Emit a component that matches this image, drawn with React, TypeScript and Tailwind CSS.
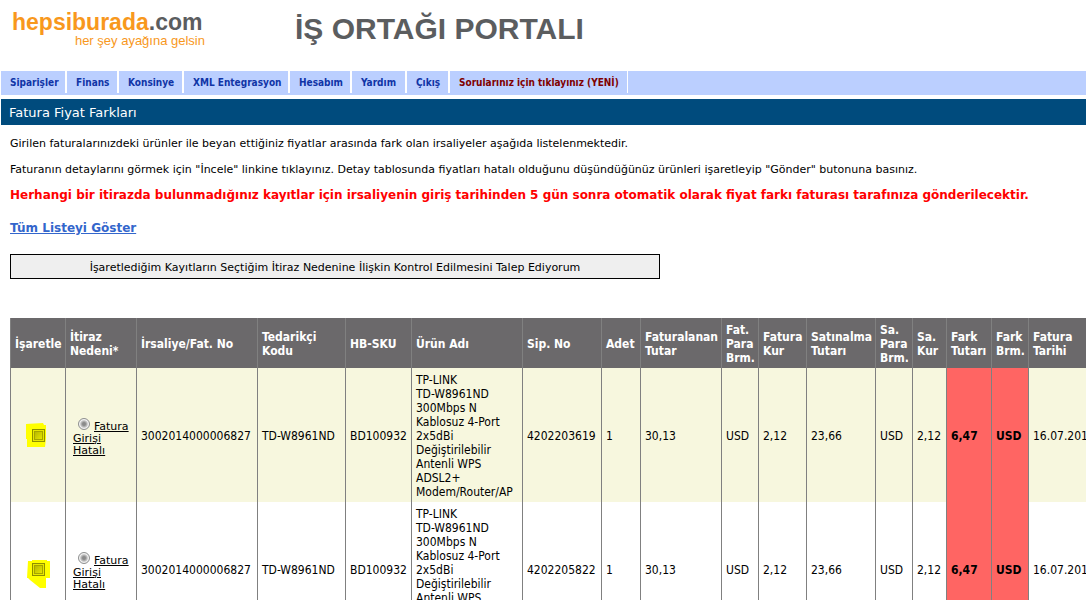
const menu = [
  { label: "Siparişler", width: "w-[66px]" },
  { label: "Finans", width: "w-[52px]" },
  { label: "Konsinye", width: "w-[65px]" },
  { label: "XML Entegrasyon", width: "w-[106px]" },
  { label: "Hesabım", width: "w-[62px]" },
  { label: "Yardım", width: "w-[55px]" },
  { label: "Çıkış", width: "w-[43px]" },
];

const columns = [
  { title: "İşaretle", width: "w-[55px]" },
  { title: "İtiraz Nedeni*", width: "w-[71px]" },
  { title: "İrsaliye/Fat. No", width: "w-[121px]" },
  { title: "Tedarikçi Kodu", width: "w-[88px]" },
  { title: "HB-SKU", width: "w-[66px]" },
  { title: "Ürün Adı", width: "w-[111px]" },
  { title: "Sip. No", width: "w-[79px]" },
  { title: "Adet", width: "w-[39px]" },
  { title: "Faturalanan Tutar", width: "w-[81px]" },
  { title: "Fat. Para Brm.", width: "w-[37px]" },
  { title: "Fatura Kur", width: "w-[48px]" },
  { title: "Satınalma Tutarı", width: "w-[69px]" },
  { title: "Sa. Para Brm.", width: "w-[37px]" },
  { title: "Sa. Kur", width: "w-[34px]" },
  { title: "Fark Tutarı", width: "w-[45px]" },
  { title: "Fark Brm.", width: "w-[37px]" },
  { title: "Fatura Tarihi", width: "w-[75px]" },
];

const product = ["TP-LINK", "TD-W8961ND", "300Mbps N", "Kablosuz 4-Port", "2x5dBi", "Değiştirilebilir", "Antenli WPS", "ADSL2+", "Modem/Router/AP"];

const rows = [
  { order: "4202203619", bg: "bg-[#f7f7de]", mark: "0,1 17,0 18,2 20,2 20,15 19,24 1,24 1,16 0,16", markPos: "-left-[6px] -top-[6px]" },
  { order: "4202205822", bg: "bg-white", mark: "1,1 5,1 5,0 20,0 20,1 23,1 23,18 19,18 19,28 13,28 3,20 1,18 0,18", markPos: "-left-[5px] -top-[3px]" },
];

const cell = "border-l border-[#808080] px-1 pt-[5px] pb-[3px] whitespace-nowrap";

export default function App() {
  return (
    <div className="h-screen overflow-hidden bg-white text-black font-['DejaVu_Sans',sans-serif] text-[11px] leading-[14px]">
      {/* Logo */}
      <header className="flex h-[71px] items-start font-['Liberation_Sans',sans-serif]">
        <a href="#" className="ml-3 mt-[10px] w-[283px]">
          <span className="block text-[23px] leading-[24px] font-bold text-[#5b5d5f]">
            <span className="text-[#f8981d]">hepsiburada</span>.com
          </span>
          <span className="block w-[193px] text-right text-[13px] leading-[14px] text-[#f8981d]">her şey ayağına gelsin</span>
        </a>
        <h1 className="mt-3 text-[30px] leading-[34px] font-bold text-[#5b5d5f] whitespace-nowrap">İŞ ORTAĞI PORTALI</h1>
      </header>

      {/* Menu */}
      <nav className="ml-px flex h-6 items-start bg-[#bbcfff] font-['DejaVu_Sans_Condensed','DejaVu_Sans',sans-serif] text-[10px] leading-[24px] font-bold text-[#1034a6] whitespace-nowrap">
        {menu.map((item) => (
          <a key={item.label} href="#" className={`${item.width} h-[22px] border-r-2 border-white pl-[9px]`}>
            {item.label}
          </a>
        ))}
        <a href="#" className="h-[22px] w-[178px] border-r border-white pl-[9px] text-[#800000]">
          Sorularınız için tıklayınız (YENİ)
        </a>
      </nav>

      <h2 className="ml-px mt-1 bg-[#004b7d] pt-[2px] pl-2 text-[13px] leading-[24px] text-white">Fatura Fiyat Farkları</h2>

      {/* Info */}
      <main className="pl-[10px] pt-3">
        <p className="mb-3 whitespace-nowrap">
          Girilen faturalarınızdeki ürünler ile beyan ettiğiniz fiyatlar arasında fark olan irsaliyeler aşağıda listelenmektedir.
        </p>
        <p className="mb-[11px] whitespace-nowrap">
          Faturanın detaylarını görmek için "İncele" linkine tıklayınız. Detay tablosunda fiyatları hatalı olduğunu düşündüğünüz ürünleri işaretleyip "Gönder" butonuna basınız.
        </p>
        <p className="text-[12px] leading-[14px] font-bold text-[#ff0000] whitespace-nowrap">
          Herhangi bir itirazda bulunmadığınız kayıtlar için irsaliyenin giriş tarihinden 5 gün sonra otomatik olarak fiyat farkı faturası tarafınıza gönderilecektir.
        </p>
        <a href="#" className="mt-[19px] block w-fit text-[12px] leading-[14px] font-bold text-[#3366cc] underline">Tüm Listeyi Göster</a>
        <button className="mt-[19px] block h-[25px] w-[650px] border border-black bg-[#efefef] pt-[2px] text-center">
          İşaretlediğim Kayıtların Seçtiğim İtiraz Nedenine İlişkin Kontrol Edilmesini Talep Ediyorum
        </button>

        {/* Records */}
        <table className="mt-[39px] w-[1093px] table-fixed border-separate border-spacing-0 font-['DejaVu_Sans_Condensed','DejaVu_Sans',sans-serif] text-[12px] leading-[14px]">
          <thead>
            <tr className="h-[50px] bg-[#6b696b] text-left text-white">
              {columns.map((column) => (
                <th key={column.title} className={`${column.width} border-l border-[#808080] pt-[5px] pb-[3px] pl-1 font-bold`}>
                  {column.title}
                </th>
              ))}
            </tr>
          </thead>
          <tbody>
            {rows.map((row) => (
              <tr key={row.order} className={`${row.bg} h-[134px]`}>
                <td className="border-l border-[#808080] p-1">
                  <label className="relative mx-auto block size-[13px]">
                    <svg className={`absolute ${row.markPos}`} width="24" height="28" aria-hidden="true">
                      <polygon points={row.mark} fill="#ffff00" />
                    </svg>
                    <input
                      type="checkbox"
                      aria-label="İşaretle"
                      className="absolute left-0 top-0 size-[13px] appearance-none border border-[#8e8f00] bg-linear-to-br from-[#adad00] to-[#f2f200] shadow-[inset_0_0_0_1px_#e8e800,inset_0_0_0_2px_#a5a500]"
                    />
                  </label>
                </td>
                <td className="border-l border-[#808080] pt-2 pb-1 pl-[7px] font-['DejaVu_Sans',sans-serif] text-[11px] leading-[12px]">
                  <input
                    type="radio"
                    id={row.order}
                    className="mr-1 ml-[5px] size-3 appearance-none rounded-full border border-[#8e8f8f] bg-radial from-[#8a8a8a] from-20% to-[#e4e4e4] to-60% shadow-[inset_0_0_0_1px_#f4f4f4]"
                  />
                  <label htmlFor={row.order} className="underline">
                    Fatura<br />Girişi<br />Hatalı
                  </label>
                </td>
                <td className={cell}>3002014000006827</td>
                <td className={cell}>TD-W8961ND</td>
                <td className={cell}>BD100932</td>
                <td className={cell}>
                  {product.map((line) => (
                    <div key={line}>{line}</div>
                  ))}
                </td>
                <td className={cell}>{row.order}</td>
                <td className={cell}>1</td>
                <td className={cell}>30,13</td>
                <td className={cell}>USD</td>
                <td className={cell}>2,12</td>
                <td className={cell}>23,66</td>
                <td className={cell}>USD</td>
                <td className={cell}>2,12</td>
                <td className={`${cell} bg-[#ff6563] font-bold`}>6,47</td>
                <td className={`${cell} bg-[#ff6563] font-bold`}>USD</td>
                <td className={cell}>16.07.2014</td>
              </tr>
            ))}
          </tbody>
        </table>
      </main>
    </div>
  );
}
